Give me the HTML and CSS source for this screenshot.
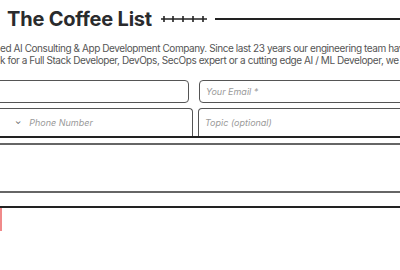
FILE: index.html
```html
<!DOCTYPE html>
<html lang="en">
<head>
    <meta charset="UTF-8">
    <meta name="viewport" content="width=device-width, initial-scale=1.0">
    <title>The Coffee List</title>
    <link rel="stylesheet" href="styles.css">
</head>
<body>
    <div class="header">
        <h1>The Coffee List</h1>
        <svg class="ticks" width="46" height="8" viewBox="0 0 46 8">
            <line x1="0" y1="4" x2="46" y2="4" stroke="#222" stroke-width="1.6"/>
            <line x1="3" y1="1" x2="3" y2="7" stroke="#222" stroke-width="1.6"/>
            <line x1="12" y1="1" x2="12" y2="7" stroke="#222" stroke-width="1.6"/>
            <line x1="22" y1="1" x2="22" y2="7" stroke="#222" stroke-width="1.6"/>
            <line x1="32" y1="1" x2="32" y2="7" stroke="#222" stroke-width="1.6"/>
            <line x1="42" y1="1" x2="42" y2="7" stroke="#222" stroke-width="1.6"/>
        </svg>
        <div class="rule"></div>
    </div>

    <p class="intro">
        <span>ed AI Consulting &amp; App Development Company. Since last 23 years our engineering team hav</span>
        <span>k for a Full Stack Developer, DevOps, SecOps expert or a cutting edge AI / ML Developer, we h</span>
    </p>

    <form class="contact">
        <div class="row row-one">
            <div class="field"></div>
            <div class="field"><span class="ph">Your Email *</span></div>
        </div>
        <div class="row row-two">
            <div class="field phone"><span class="chev">&#8964;</span><span class="ph">Phone Number</span></div>
            <div class="field"><span class="ph">Topic (optional)</span></div>
        </div>
        <div class="message"></div>
        <div class="next-field">
            <div class="error-mark"></div>
        </div>
    </form>
</body>
</html>
```

FILE: styles.css
```css
* {
    margin: 0;
    padding: 0;
    box-sizing: border-box;
}

body {
    font-family: 'Inter', 'Noto Sans', sans-serif;
    background: #fff;
    color: #222;
    overflow: hidden;
}

.header {
    display: flex;
    align-items: center;
    padding: 4px 0 0 7px;
    height: 34px;
}

.header h1 {
    font-size: 20px;
    font-weight: 700;
    color: #2a2b2d;
    letter-spacing: -0.2px;
    white-space: nowrap;
}

.ticks {
    margin-left: 9px;
    flex-shrink: 0;
}

.rule {
    flex: 1;
    height: 2px;
    background: #222;
    margin-left: 8px;
}

.intro {
    margin-top: 8px;
    font-size: 10px;
    line-height: 12px;
    letter-spacing: -0.42px;
    color: #555;
    white-space: nowrap;
    overflow: hidden;
}

.intro span {
    display: block;
}

.contact {
    margin: 14px -20px 0 -20px;
}

.row {
    display: grid;
}

.row-one {
    grid-template-columns: 209px 1fr;
    column-gap: 10px;
}

.row-two {
    grid-template-columns: 213px 1fr;
    column-gap: 5px;
    margin-top: 5px;
    border-bottom: 2px solid #222;
}

.field {
    height: 23px;
    border: 1.5px solid #555;
    border-radius: 4px;
    display: flex;
    align-items: center;
    padding-left: 6px;
}

.row-two .field {
    height: 28px;
    border-bottom: none;
    border-radius: 4px 4px 0 0;
}

.ph {
    font-size: 9px;
    font-style: italic;
    color: #9a9a9a;
}

.phone {
    padding-left: 34px;
}

.chev {
    font-size: 8px;
    color: #555;
    margin-right: 8px;
    line-height: 1;
    position: relative;
    top: -2px;
}

.message {
    margin-top: 5px;
    height: 50px;
    border-top: 2px solid #666;
    border-bottom: 2px solid #666;
}

.next-field {
    margin-top: 13px;
    height: 40px;
    border-top: 2px solid #222;
    padding-left: 20px;
}

.error-mark {
    width: 2px;
    height: 23px;
    background: #f08a8a;
}
```
